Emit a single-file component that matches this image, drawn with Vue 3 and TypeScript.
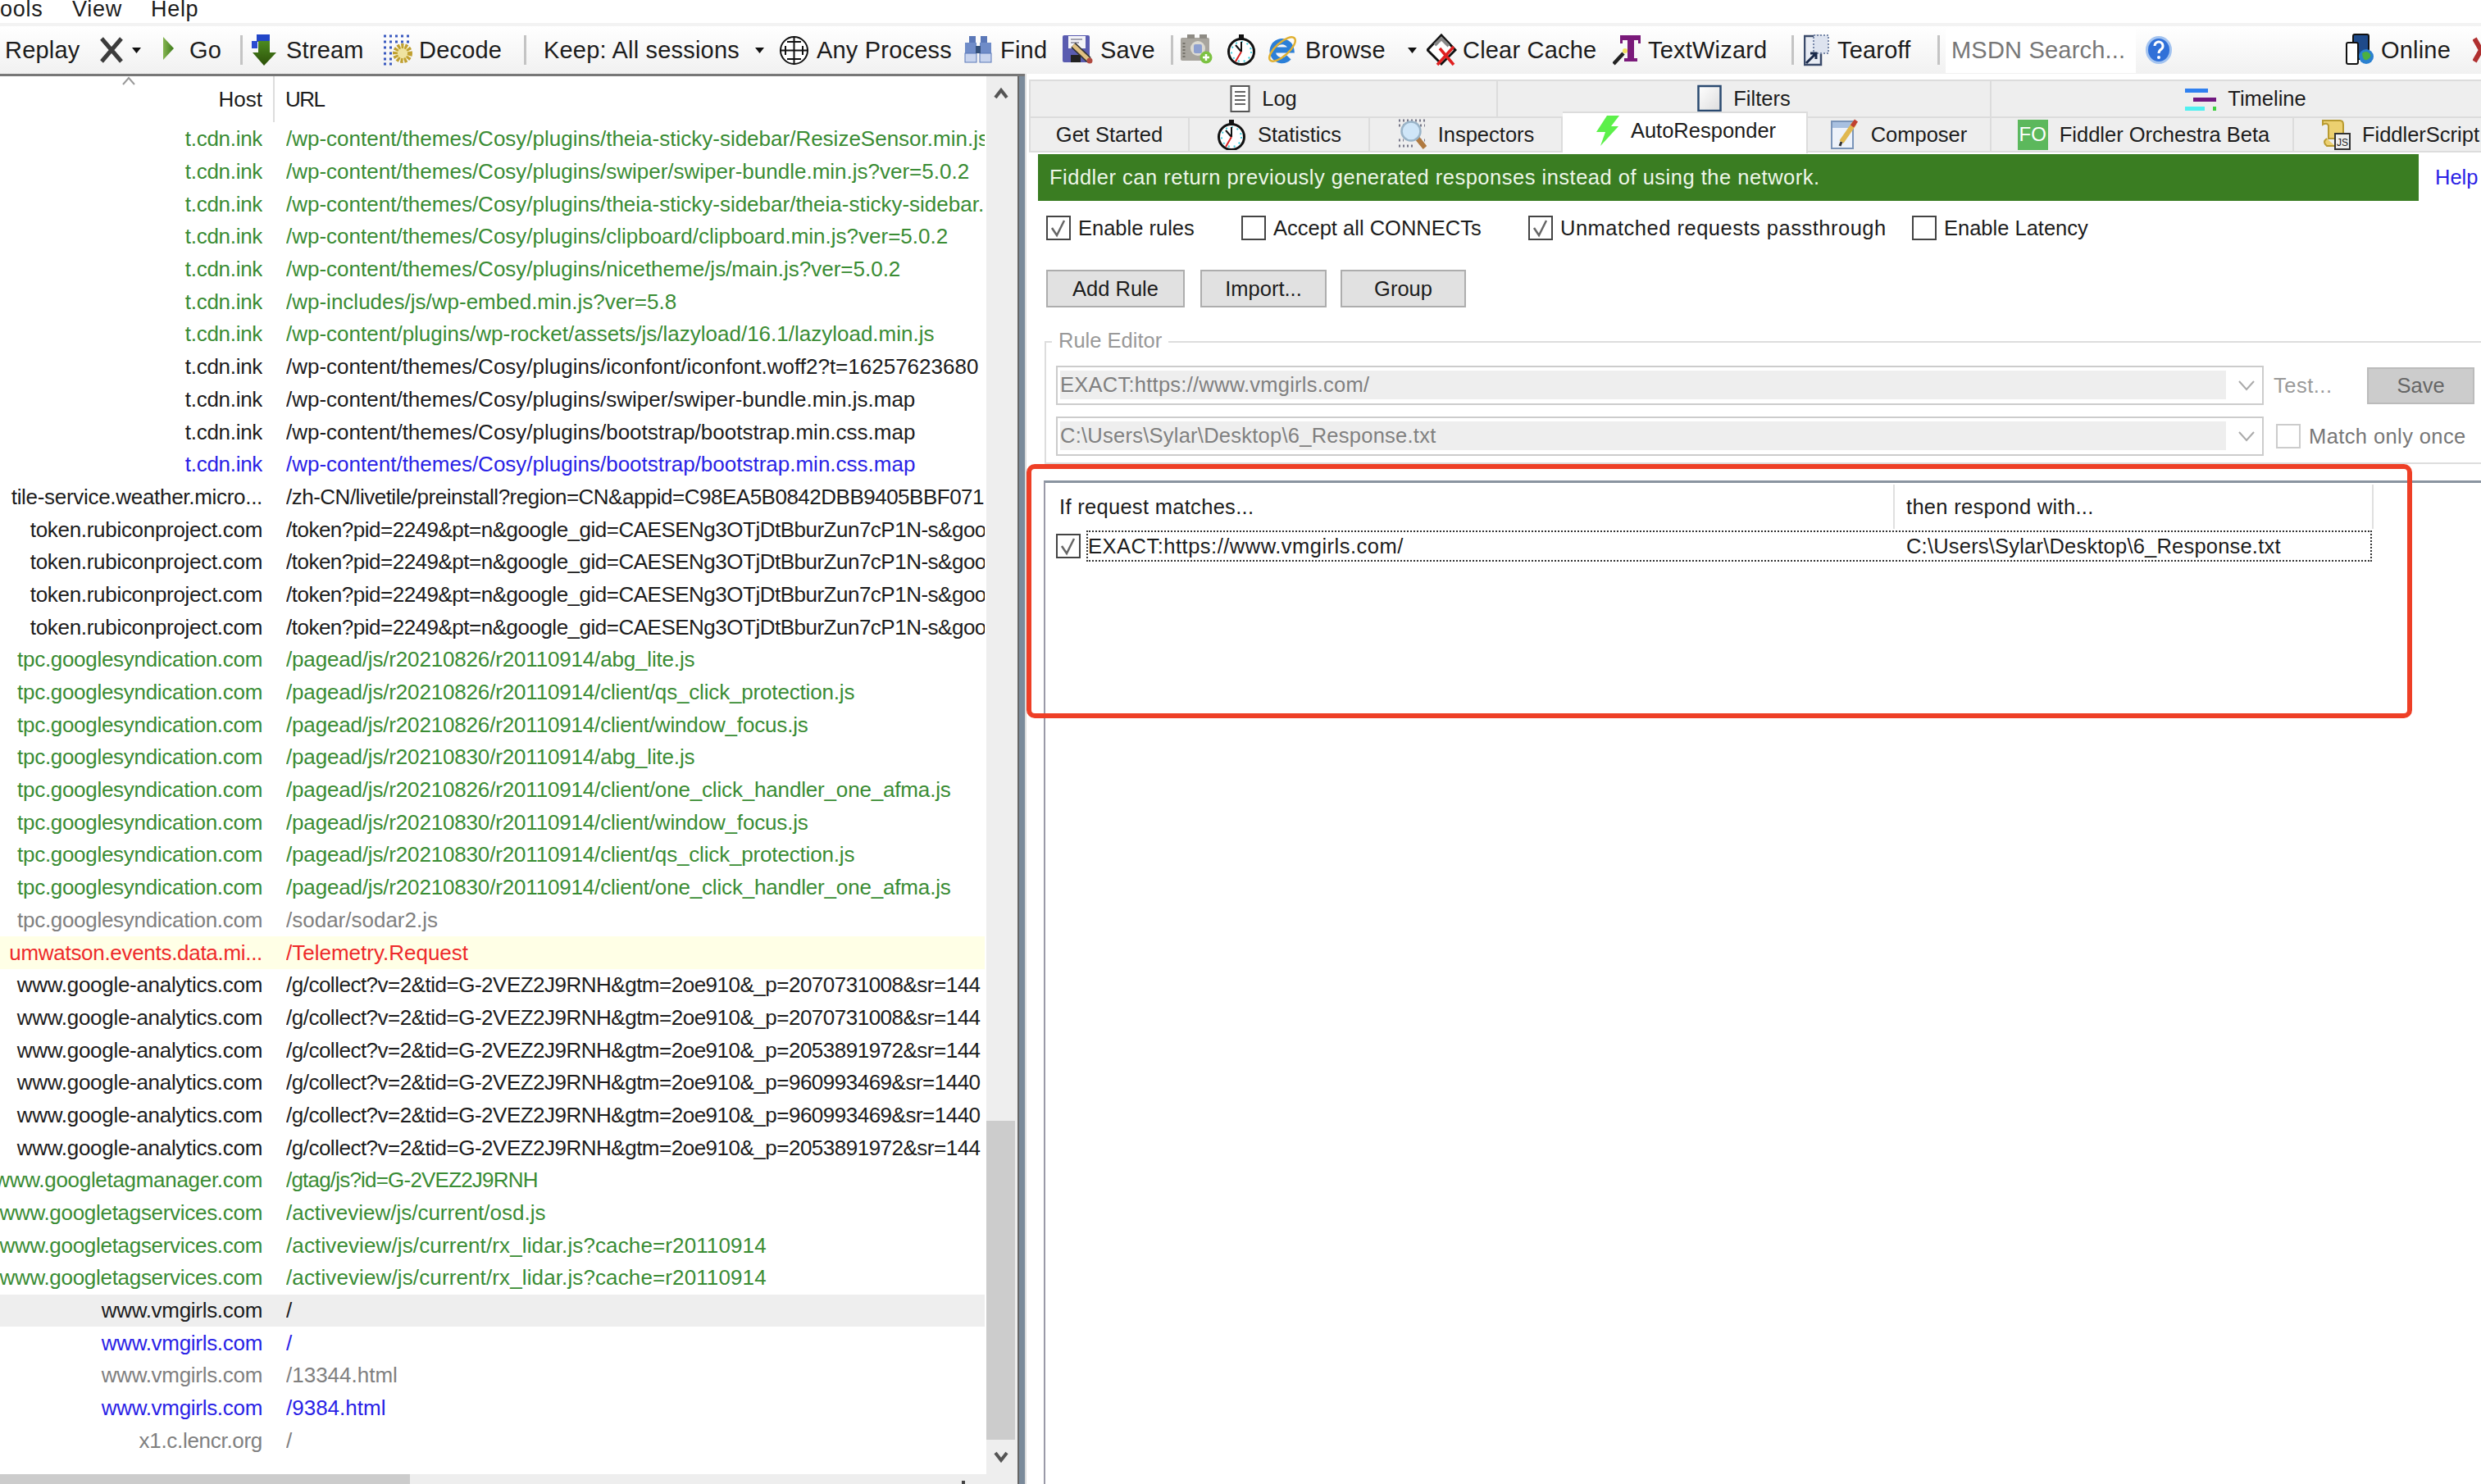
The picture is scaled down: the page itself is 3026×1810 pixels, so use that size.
<script setup lang="ts">
import { computed } from 'vue';

type Tool = { x: number; icon?: string; w?: number; label?: string; tx?: number; search?: boolean };
type Tab = { label: string; icon?: string; w?: number; span: number; active?: boolean; fo?: boolean };

const icons: Record<string, string> = {
  x: '<path d="M3 6 27 34M27 6 3 34" stroke="#3c3c3c" stroke-width="5" fill="none"/>',
  caret: '<path d="M0 17h11l-5.5 7z" fill="#111"/>',
  sep: '<rect x="0" y="2" width="3" height="36" fill="#c4c4c4"/>',
  play: '<defs><linearGradient id="gp" x1="0" x2="1"><stop offset="0" stop-color="#86b552"/><stop offset="1" stop-color="#3c7a18"/></linearGradient></defs><path d="M1 4 14 18 1 32Z" fill="url(#gp)"/>',
  stream: '<defs><linearGradient id="gs" x1="0" y1="0" x2="0" y2="1"><stop offset="0" stop-color="#4c8a20"/><stop offset="1" stop-color="#2c5008"/></linearGradient></defs><rect x="0" y="9" width="7" height="9" fill="#2a4bd0"/><rect x="6" y="1" width="16" height="9" fill="#2246c8"/><path d="M8 9h14v14h8L15 39 1 23h7z" fill="url(#gs)"/>',
  decode: '<path d="M2 3H37M2 10H37M2 17H12M2 24H12M2 31H12M2 37H12" stroke="#3a5ac0" stroke-width="3" stroke-dasharray="3 4" fill="none"/><circle cx="25" cy="24" r="9" fill="#efe3a0" stroke="#c0a030" stroke-width="6" stroke-dasharray="3 1.5"/>',
  process: '<circle cx="18.5" cy="20.5" r="16.5" fill="#fff" stroke="#111" stroke-width="2"/><path d="M18.5 3v35M1 20.5h35M10 10h17M10 31h17M8 15v11M29 15v11" stroke="#111" stroke-width="2" fill="none"/>',
  find: '<rect x="7" y="3" width="8" height="9" fill="#5b78b8"/><rect x="21" y="3" width="8" height="9" fill="#5b78b8"/><rect x="2" y="11" width="14" height="14" fill="#6f8cc8"/><rect x="20" y="11" width="14" height="14" fill="#6f8cc8"/><rect x="2" y="24" width="14" height="11" fill="#c8d4ee" stroke="#5b78b8"/><rect x="20" y="24" width="14" height="11" fill="#c8d4ee" stroke="#5b78b8"/><rect x="15" y="15" width="6" height="9" fill="#34507a"/>',
  save: '<rect x="0" y="2" width="33" height="33" rx="2" fill="#5a5cb0"/><rect x="7" y="3" width="21" height="15" fill="#f4f4f8"/><path d="M10 7h14M10 11h10" stroke="#889" stroke-width="1.5"/><rect x="10" y="26" width="12" height="9" fill="#222"/><path d="M13 14 32 32" stroke="#333" stroke-width="8"/><path d="M13 14 32 32" stroke="#e0c080" stroke-width="5"/><circle cx="33" cy="33" r="3.5" fill="#b04a40"/>',
  camera: '<rect x="0" y="5" width="35" height="28" rx="2" fill="#a8a59e"/><rect x="8" y="1" width="9" height="5" fill="#8e8b84"/><rect x="23" y="1" width="9" height="5" fill="#8e8b84"/><path d="M4 11v18" stroke="#77746c" stroke-width="3" stroke-dasharray="2 2"/><circle cx="21" cy="18" r="9" fill="#dcdad2"/><rect x="16" y="13" width="10" height="11" rx="2" fill="#8ea0d0"/><circle cx="31" cy="29" r="7.5" fill="#7cc242"/><path d="M31 25v8M27 29h8" stroke="#fff" stroke-width="2.5"/>',
  timer: '<rect x="15" y="1" width="6" height="5" fill="#111"/><circle cx="18" cy="22" r="15.5" fill="#fff" stroke="#111" stroke-width="3"/><circle cx="18" cy="22" r="12" fill="none" stroke="#40d0e0" stroke-width="2" stroke-dasharray="2 5"/><path d="M18 22V10M18 22 11 14" stroke="#111" stroke-width="2" fill="none"/><path d="M18 22 11 34" stroke="#d82020" stroke-width="2" fill="none"/>',
  ie: '<path d="M7 20H29A11.5 11.5 0 1 0 26 29" stroke="#2b7fd8" stroke-width="7" fill="none"/><ellipse cx="18" cy="19" rx="20" ry="8" transform="rotate(-42 18 19)" fill="none" stroke="#e0b030" stroke-width="2.5"/>',
  clear: '<path d="M18 2 35 20 18 37 1 20Z" fill="#fff" stroke="#111" stroke-width="3"/><path d="M10 14 18 6 27 15" stroke="#888" stroke-width="4" fill="none"/><path d="M16 18 33 38M33 16 13 38" stroke="#e02020" stroke-width="3.5"/>',
  wizard: '<path d="M9 2H34V12H31V8H26V30H30V34H14V30H18V8H12V12H9Z" fill="#7a1a7a"/><path d="M1 37 13 24" stroke="#222" stroke-width="4.5"/><circle cx="15" cy="21" r="3" fill="#f4e060"/>',
  tearoff: '<rect x="1" y="3" width="20" height="35" fill="#e8ecf4" stroke="#3a4a6a" stroke-width="2.5"/><rect x="12" y="2" width="18" height="22" fill="#dde3ef" stroke="#7a8aaa" stroke-width="2" stroke-dasharray="2 2"/><path d="M3 36 14 25M8 24h7v7" stroke="#1a2a4a" stroke-width="3" fill="none"/>',
  help: '<ellipse cx="16" cy="20" rx="14.5" ry="15.5" fill="#3070d8" stroke="#a4c4f0" stroke-width="3"/><path d="M11 15a5 5 0 1 1 8 4q-3 2-3 5" stroke="#fff" stroke-width="3" fill="none"/><circle cx="16" cy="29" r="2" fill="#fff"/>',
  online: '<rect x="9" y="1" width="19" height="30" rx="2" fill="#1e4a8a" stroke="#111" stroke-width="2"/><rect x="1" y="11" width="14" height="26" rx="2" fill="#fff" stroke="#111" stroke-width="2"/><circle cx="25" cy="28" r="9" fill="#2a80d0"/><path d="M20 24q5-4 9 0t-3 8q-5 2-6-8" fill="#4cb040"/>',
  close: '<path d="M2 6 18 34M18 6 2 34" stroke="#b03030" stroke-width="6"/>',
  log: '<rect x="1.5" y="3" width="22" height="31" fill="#fff" stroke="#555" stroke-width="2"/><path d="M6 10h13M6 15h13M6 20h13M6 25h13" stroke="#666" stroke-width="2"/>',
  filters: '<defs><linearGradient id="gf" x1="0" y1="0" x2="1" y2="1"><stop offset="0" stop-color="#fff"/><stop offset="1" stop-color="#ddd"/></linearGradient></defs><rect x="1.5" y="3" width="27" height="30" fill="url(#gf)" stroke="#2a4a70" stroke-width="2.5"/>',
  timeline: '<rect x="0" y="6" width="28" height="5" fill="#2f80f0"/><rect x="10" y="17" width="28" height="5" fill="#701880"/><rect x="0" y="28" width="24" height="5" fill="#50f0f0"/><rect x="34" y="28" width="4" height="5" fill="#40d040"/>',
  inspectors: '<path d="M2 2H34M2 8H8M28 8H34M2 26H8M28 26H34M2 33H22" stroke="#778" stroke-width="3" stroke-dasharray="2 3" fill="none"/><path d="M25 24 34 35" stroke="#b07a40" stroke-width="6"/><circle cx="17" cy="15" r="11.5" fill="#cfe6f8" stroke="#9ab4c8" stroke-width="2.5"/>',
  bolt: '<path d="M13 0H28L18 13H27L5 37 11 20H0Z" fill="#5cf04a"/>',
  composer: '<rect x="1" y="3" width="26" height="33" fill="#edf2fa" stroke="#7a94b8" stroke-width="2"/><rect x="2" y="4" width="24" height="7" fill="#a8c0e0"/><path d="M13 28 29 5" stroke="#e0b850" stroke-width="6"/><path d="M26 9 31 2" stroke="#c04030" stroke-width="5"/><path d="M13 28 11 33" stroke="#333" stroke-width="3"/>',
  script: '<path d="M3 2H24Q28 2 28 7V24H10V8Q8 4 3 7Z" fill="#ecd070" stroke="#b89a30" stroke-width="2"/><path d="M8 24Q2 28 8 33H18" fill="#ecd070" stroke="#b89a30" stroke-width="2"/><rect x="18" y="18" width="18" height="19" fill="#eee" stroke="#333" stroke-width="2"/><text x="27" y="33" font-size="12" font-family="Liberation Sans" text-anchor="middle" fill="#222">JS</text>',
};

const toolList: Tool[] = [
  { x: 6, label: 'Replay' },
  { x: 121, icon: 'x', w: 30 },
  { x: 161, icon: 'caret', w: 11 },
  { x: 198, icon: 'play', w: 15, label: 'Go', tx: 231 },
  { x: 293, icon: 'sep', w: 3 },
  { x: 307, icon: 'stream', w: 31, label: 'Stream', tx: 349 },
  { x: 466, icon: 'decode', w: 38, label: 'Decode', tx: 511 },
  { x: 639, icon: 'sep', w: 3 },
  { x: 663, label: 'Keep: All sessions' },
  { x: 921, icon: 'caret', w: 11 },
  { x: 950, icon: 'process', w: 37, label: 'Any Process', tx: 996 },
  { x: 1175, icon: 'find', w: 35, label: 'Find', tx: 1220 },
  { x: 1296, icon: 'save', w: 38, label: 'Save', tx: 1342 },
  { x: 1428, icon: 'sep', w: 3 },
  { x: 1440, icon: 'camera', w: 39 },
  { x: 1496, icon: 'timer', w: 36 },
  { x: 1546, icon: 'ie', w: 36, label: 'Browse', tx: 1592 },
  { x: 1717, icon: 'caret', w: 11 },
  { x: 1740, icon: 'clear', w: 37, label: 'Clear Cache', tx: 1784 },
  { x: 1967, icon: 'wizard', w: 34, label: 'TextWizard', tx: 2010 },
  { x: 2185, icon: 'sep', w: 3 },
  { x: 2200, icon: 'tearoff', w: 31, label: 'Tearoff', tx: 2241 },
  { x: 2363, icon: 'sep', w: 3 },
  { x: 2373, label: 'MSDN Search...', search: true },
  { x: 2617, icon: 'help', w: 32 },
  { x: 2861, icon: 'online', w: 34, label: 'Online', tx: 2904 },
  { x: 3016, icon: 'close', w: 20 },
];

// each tool cell is as wide as the distance to the next tool
const tools = computed(() =>
  toolList.map((t, i) => ({
    ...t,
    cell: (toolList[i + 1]?.x ?? 3040) - t.x,
    gap: t.tx && t.w ? t.tx - t.x - t.w : 0,
  })),
);

const topTabs: Tab[] = [
  { label: 'Log', icon: 'log', w: 25, span: 572 },
  { label: 'Filters', icon: 'filters', w: 30, span: 602 },
  { label: 'Timeline', icon: 'timeline', w: 38, span: 622 },
];
const subTabs: Tab[] = [
  { label: 'Get Started', span: 196 },
  { label: 'Statistics', icon: 'timer', w: 36, span: 220 },
  { label: 'Inspectors', icon: 'inspectors', w: 36, span: 235 },
  { label: 'AutoResponder', icon: 'bolt', w: 28, span: 299, active: true },
  { label: 'Composer', icon: 'composer', w: 35, span: 224 },
  { label: 'Fiddler Orchestra Beta', fo: true, span: 369 },
  { label: 'FiddlerScript', icon: 'script', w: 37, span: 260 },
];

const options = [
  { label: 'Enable rules', on: true, cell: 238 },
  { label: 'Accept all CONNECTs', on: false, cell: 350 },
  { label: 'Unmatched requests passthrough', on: true, cell: 468, wide: true },
  { label: 'Enable Latency', on: false, cell: 300 },
];
const buttons = [
  { label: 'Add Rule', width: 169, gap: 19 },
  { label: 'Import...', width: 154, gap: 17 },
  { label: 'Group', width: 153, gap: 0 },
];

const cdn = '/wp-content/themes/Cosy/plugins/';
const token = '/token?pid=2249&pt=n&google_gid=CAESENg3OTjDtBburZun7cP1N-s&goog';
const tpc = 'tpc.googlesyndication.com';
const ga = 'www.google-analytics.com';
const gts = 'www.googletagservices.com';
const gtag = '/g/collect?v=2&tid=G-2VEZ2J9RNH&gtm=2oe910&_p=';

const rows: { host: string; url: string; kind: string }[] = [
  { host: 't.cdn.ink', url: cdn + 'theia-sticky-sidebar/ResizeSensor.min.js?', kind: 'green' },
  { host: 't.cdn.ink', url: cdn + 'swiper/swiper-bundle.min.js?ver=5.0.2', kind: 'green' },
  { host: 't.cdn.ink', url: cdn + 'theia-sticky-sidebar/theia-sticky-sidebar.m', kind: 'green' },
  { host: 't.cdn.ink', url: cdn + 'clipboard/clipboard.min.js?ver=5.0.2', kind: 'green' },
  { host: 't.cdn.ink', url: cdn + 'nicetheme/js/main.js?ver=5.0.2', kind: 'green' },
  { host: 't.cdn.ink', url: '/wp-includes/js/wp-embed.min.js?ver=5.8', kind: 'green' },
  { host: 't.cdn.ink', url: '/wp-content/plugins/wp-rocket/assets/js/lazyload/16.1/lazyload.min.js', kind: 'green' },
  { host: 't.cdn.ink', url: cdn + 'iconfont/iconfont.woff2?t=16257623680', kind: 'black' },
  { host: 't.cdn.ink', url: cdn + 'swiper/swiper-bundle.min.js.map', kind: 'black' },
  { host: 't.cdn.ink', url: cdn + 'bootstrap/bootstrap.min.css.map', kind: 'black' },
  { host: 't.cdn.ink', url: cdn + 'bootstrap/bootstrap.min.css.map', kind: 'blue' },
  { host: 'tile-service.weather.micro...', url: '/zh-CN/livetile/preinstall?region=CN&appid=C98EA5B0842DBB9405BBF071E', kind: 'black' },
  { host: 'token.rubiconproject.com', url: token, kind: 'black' },
  { host: 'token.rubiconproject.com', url: token, kind: 'black' },
  { host: 'token.rubiconproject.com', url: token, kind: 'black' },
  { host: 'token.rubiconproject.com', url: token, kind: 'black' },
  { host: tpc, url: '/pagead/js/r20210826/r20110914/abg_lite.js', kind: 'green' },
  { host: tpc, url: '/pagead/js/r20210826/r20110914/client/qs_click_protection.js', kind: 'green' },
  { host: tpc, url: '/pagead/js/r20210826/r20110914/client/window_focus.js', kind: 'green' },
  { host: tpc, url: '/pagead/js/r20210830/r20110914/abg_lite.js', kind: 'green' },
  { host: tpc, url: '/pagead/js/r20210826/r20110914/client/one_click_handler_one_afma.js', kind: 'green' },
  { host: tpc, url: '/pagead/js/r20210830/r20110914/client/window_focus.js', kind: 'green' },
  { host: tpc, url: '/pagead/js/r20210830/r20110914/client/qs_click_protection.js', kind: 'green' },
  { host: tpc, url: '/pagead/js/r20210830/r20110914/client/one_click_handler_one_afma.js', kind: 'green' },
  { host: tpc, url: '/sodar/sodar2.js', kind: 'grey' },
  { host: 'umwatson.events.data.mi...', url: '/Telemetry.Request', kind: 'red' },
  { host: ga, url: gtag + '2070731008&sr=144', kind: 'black' },
  { host: ga, url: gtag + '2070731008&sr=144', kind: 'black' },
  { host: ga, url: gtag + '2053891972&sr=144', kind: 'black' },
  { host: ga, url: gtag + '960993469&sr=1440', kind: 'black' },
  { host: ga, url: gtag + '960993469&sr=1440', kind: 'black' },
  { host: ga, url: gtag + '2053891972&sr=144', kind: 'black' },
  { host: 'www.googletagmanager.com', url: '/gtag/js?id=G-2VEZ2J9RNH', kind: 'green' },
  { host: gts, url: '/activeview/js/current/osd.js', kind: 'green' },
  { host: gts, url: '/activeview/js/current/rx_lidar.js?cache=r20110914', kind: 'green' },
  { host: gts, url: '/activeview/js/current/rx_lidar.js?cache=r20110914', kind: 'green' },
  { host: 'www.vmgirls.com', url: '/', kind: 'selected' },
  { host: 'www.vmgirls.com', url: '/', kind: 'blue' },
  { host: 'www.vmgirls.com', url: '/13344.html', kind: 'grey' },
  { host: 'www.vmgirls.com', url: '/9384.html', kind: 'blue' },
  { host: 'x1.c.lencr.org', url: '/', kind: 'grey' },
];

// the long query strings sit tighter in the reference font than in ours
const urlFit = (url: string) => {
  if (url.startsWith('/gtag')) return 'fit-gtag';
  if (url.startsWith('/g/') || url.startsWith('/token') || url.startsWith('/zh-CN')) return 'fit-tight';
  if (url.startsWith('/pagead')) return 'fit-snug';
  if (url.includes('rx_lidar')) return 'fit-wide';
  return '';
};
</script>

<template>
  <div class="app">
    <div class="menu">
      <span class="menu-first">ools</span>
      <span class="menu-view">View</span>
      <span class="menu-help">Help</span>
    </div>

    <div class="toolbar">
      <div v-for="tool in tools" :key="tool.x" class="tool" :style="{ width: tool.cell + 'px' }">
        <svg
          v-if="tool.icon"
          :width="tool.w"
          height="40"
          :viewBox="`0 0 ${tool.w} 40`"
          class="tool-icon"
          v-html="icons[tool.icon]"
        ></svg>
        <span v-if="tool.search" class="search">{{ tool.label }}</span>
        <span v-else-if="tool.label" :style="{ marginLeft: tool.gap + 'px' }">{{ tool.label }}</span>
      </div>
    </div>

    <div class="main">
      <div class="sessions">
        <div class="list">
          <div class="head">
            <svg class="sort" width="18" height="11" viewBox="0 0 18 11">
              <path d="M2 10 9 2l7 8" fill="none" stroke="#999" stroke-width="2" />
            </svg>
            <div class="host">Host</div>
            <div class="url-head">URL</div>
          </div>
          <div v-for="(row, i) in rows" :key="i" class="row" :class="row.kind">
            <div class="host">{{ row.host }}</div>
            <div class="url" :class="urlFit(row.url)">{{ row.url }}</div>
          </div>
          <div class="list-rest"></div>
          <div class="hbar">
            <div class="hthumb"></div>
            <div class="hmark"></div>
          </div>
        </div>
        <div class="vbar">
          <div class="varrow">
            <svg width="18" height="14" viewBox="0 0 18 14">
              <path d="M2 12 9 3l7 9" fill="none" stroke="#555" stroke-width="4" />
            </svg>
          </div>
          <div class="vspace"></div>
          <div class="vthumb"></div>
          <div class="varrow">
            <svg width="18" height="14" viewBox="0 0 18 14">
              <path d="M2 2 9 11l7-9" fill="none" stroke="#555" stroke-width="4" />
            </svg>
          </div>
          <div class="vfoot"></div>
        </div>
        <div class="splitter"></div>
      </div>

      <div class="pane">
        <div class="tabs top-tabs">
          <div v-for="tab in topTabs" :key="tab.label" class="tab" :style="{ width: tab.span + 'px' }">
            <svg :width="tab.w" height="38" :viewBox="`0 0 ${tab.w} 38`" v-html="icons[tab.icon!]"></svg>
            <span>{{ tab.label }}</span>
          </div>
        </div>
        <div class="tabs sub-tabs">
          <div
            v-for="tab in subTabs"
            :key="tab.label"
            class="tab"
            :class="{ active: tab.active, 'fo-tab': tab.fo }"
            :style="{ width: tab.span + 'px' }"
          >
            <span v-if="tab.fo" class="fo">FO</span>
            <svg
              v-else-if="tab.icon"
              :width="tab.w"
              height="38"
              :viewBox="`0 0 ${tab.w} 38`"
              v-html="icons[tab.icon]"
            ></svg>
            <span>{{ tab.label }}</span>
          </div>
        </div>

        <div class="body">
          <div class="banner-row">
            <div class="banner">Fiddler can return previously generated responses instead of using the network.</div>
            <span class="help-link">Help</span>
          </div>

          <div class="options">
            <label
              v-for="opt in options"
              :key="opt.label"
              class="option"
              :class="{ wide: opt.wide }"
              :style="{ width: opt.cell + 'px' }"
            >
              <span class="cb">
                <svg v-if="opt.on" width="26" height="26" viewBox="0 0 26 26">
                  <path d="M5 13l6 9L20 4" fill="none" stroke="#666" stroke-width="2.5" />
                </svg>
              </span>
              {{ opt.label }}
            </label>
          </div>

          <div class="actions">
            <button
              v-for="btn in buttons"
              :key="btn.label"
              class="btn"
              :style="{ width: btn.width + 'px', marginRight: btn.gap + 'px' }"
            >
              {{ btn.label }}
            </button>
          </div>

          <div class="editor">
            <span class="legend">Rule Editor</span>
            <div class="editor-row">
              <div class="combo">
                <div class="combo-fill">EXACT:https://www.vmgirls.com/</div>
                <svg class="combo-arrow" width="22" height="14" viewBox="0 0 22 14">
                  <path d="M2 2l9 10 9-10" fill="none" stroke="#aaa" stroke-width="2" />
                </svg>
              </div>
              <span class="test">Test...</span>
              <button class="save">Save</button>
            </div>
            <div class="editor-row second">
              <div class="combo">
                <div class="combo-fill">C:\Users\Sylar\Desktop\6_Response.txt</div>
                <svg class="combo-arrow" width="22" height="14" viewBox="0 0 22 14">
                  <path d="M2 2l9 10 9-10" fill="none" stroke="#aaa" stroke-width="2" />
                </svg>
              </div>
              <label class="once"><span class="cb off"></span>Match only once</label>
            </div>
          </div>

          <div class="rules">
            <div class="rules-head">
              <div class="rules-col first">If request matches...</div>
              <div class="rules-col">then respond with...</div>
            </div>
            <div class="rule">
              <span class="cb">
                <svg width="26" height="26" viewBox="0 0 26 26">
                  <path d="M5 13l6 9L20 4" fill="none" stroke="#666" stroke-width="2.5" />
                </svg>
              </span>
              <div class="rule-line">
                <div class="rule-match">EXACT:https://www.vmgirls.com/</div>
                <div>C:\Users\Sylar\Desktop\6_Response.txt</div>
              </div>
            </div>
          </div>
        </div>
      </div>
    </div>

    <div class="callout"></div>
  </div>
</template>

<style scoped>
.app {
  position: relative;
  width: 3026px;
  height: 1810px;
  overflow: hidden;
  background: #fff;
  color: #1c1c1c;
  font-family: "Liberation Sans", Arial, sans-serif;
  font-size: 26px;
  display: flex;
  flex-direction: column;
}

.menu {
  height: 28px;
  display: flex;
  align-items: center;
  font-size: 27px;
  letter-spacing: 0.7px;
  overflow: hidden;
  flex: none;
  padding-bottom: 6px;
  box-sizing: border-box;
}
.menu-first { width: 88px; }
.menu-view { width: 96px; }

.toolbar {
  height: 62px;
  flex: none;
  display: flex;
  align-items: center;
  padding-left: 6px;
  box-sizing: border-box;
  border-top: 4px solid #f3f3f3;
  background: linear-gradient(#fff, #f1f1f1);
  font-size: 29px;
  letter-spacing: 0.2px;
  white-space: nowrap;
}
.tool {
  flex: none;
  display: flex;
  align-items: center;
  height: 40px;
}
.tool-icon { flex: none; }
.search {
  width: 232px;
  height: 55px;
  line-height: 55px;
  background: #fff;
  color: #777;
  padding-left: 7px;
  box-sizing: border-box;
  flex: none;
}

.main {
  flex: 1;
  display: flex;
  min-height: 0;
}

.sessions {
  width: 1250px;
  flex: none;
  display: flex;
  border-top: 3px solid #777;
  box-sizing: border-box;
}
.list {
  width: 1203px;
  flex: none;
  display: flex;
  flex-direction: column;
  min-width: 0;
  background: #fff;
}
.head {
  position: relative;
  height: 57px;
  flex: none;
  display: grid;
  grid-template-columns: 320px 1fr;
  column-gap: 28px;
  align-items: center;
}
.head::after {
  content: "";
  position: absolute;
  left: 333px;
  top: 0;
  width: 2px;
  height: 56px;
  background: #ddd;
}
.url-head { letter-spacing: -1.5px; }
.sort {
  position: absolute;
  left: 148px;
  top: 0;
}
.row {
  height: 39.7px;
  width: 1201px;
  flex: none;
  display: grid;
  grid-template-columns: 320px 1fr;
  column-gap: 29px;
  align-items: center;
  white-space: nowrap;
}
.host {
  display: flex;
  justify-content: flex-end;
  overflow: hidden;
  white-space: nowrap;
}
.row .host { letter-spacing: -0.3px; }
.url {
  overflow: hidden;
}
.fit-tight { letter-spacing: -0.5px; }
.fit-snug { letter-spacing: -0.17px; }
.fit-wide { letter-spacing: 0.12px; }
.fit-gtag { letter-spacing: -0.8px; }
.green { color: #3a8c34; }
.black { color: #1c1c1c; }
.blue { color: #2a22e6; }
.grey { color: #808080; }
.red { color: #ee2a2a; background: #ffffe6; }
.selected { background: #eeeeee; }
.list-rest { flex: 1; }
.hbar {
  height: 12px;
  flex: none;
  background: #eee;
  display: flex;
  justify-content: space-between;
}
.hthumb {
  width: 500px;
  background: #ccc;
}
.hmark {
  width: 4px;
  height: 4px;
  margin: 8px 26px 0 0;
  background: #444;
}

.vbar {
  width: 38px;
  flex: none;
  background: #eee;
  display: flex;
  flex-direction: column;
  align-items: flex-start;
}
.varrow {
  height: 42px;
  width: 35px;
  display: flex;
  align-items: center;
  justify-content: center;
  flex: none;
}
.vspace { flex: 1; }
.vthumb {
  width: 35px;
  height: 389px;
  background: #ccc;
  flex: none;
}
.vfoot { height: 12px; flex: none; }
.splitter {
  width: 9px;
  flex: none;
  box-sizing: border-box;
  background: #7b8b9b;
  border-left: 2px solid #666;
}

.pane {
  flex: 1;
  min-width: 0;
  border-left: 2px solid #ddd;
  display: flex;
  flex-direction: column;
  font-size: 25.5px;
  overflow: hidden;
}
.tabs {
  display: flex;
  flex: none;
  padding-left: 3px;
  width: max-content;
}
.top-tabs {
  height: 45px;
  margin-top: 7px;
}
.sub-tabs {
  height: 44px;
  position: relative;
}
.tab {
  flex: none;
  box-sizing: border-box;
  display: flex;
  align-items: center;
  justify-content: center;
  gap: 14px;
  background: #eeeeee;
  border: 2px solid #dcdcdc;
  border-left-width: 0;
  white-space: nowrap;
}
.tab:first-child { border-left-width: 2px; }
.top-tabs .tab { border-bottom-width: 0; }
.tab.active {
  background: #fff;
  height: 51px;
  margin-top: -6px;
  border-bottom: 0;
  padding: 0 0 6px 4px;
}
.fo-tab { padding-left: 4px; }
.fo {
  width: 37px;
  height: 37px;
  background: #5cb85c;
  color: #fff;
  font-size: 24px;
  display: flex;
  align-items: center;
  justify-content: center;
}

.body {
  flex: 1;
  min-height: 0;
  display: flex;
  flex-direction: column;
  padding-left: 14px;
}
.banner-row {
  margin-top: 2px;
  display: flex;
  align-items: center;
  white-space: nowrap;
}
.banner {
  width: 1684px;
  height: 57px;
  flex: none;
  box-sizing: border-box;
  padding-left: 14px;
  line-height: 56px;
  background: #3a7d22;
  color: #eef6e8;
  letter-spacing: 0.5px;
}
.help-link {
  margin-left: 20px;
  color: #2a22e6;
}
.options {
  margin-top: 18px;
  display: flex;
  padding-left: 10px;
  white-space: nowrap;
}
.option {
  display: flex;
  align-items: center;
  gap: 9px;
  flex: none;
}
.option.wide { letter-spacing: 0.5px; }
.cb {
  width: 30px;
  height: 30px;
  box-sizing: border-box;
  border: 2px solid #444;
  background: #fff;
  flex: none;
  display: block;
}
.cb svg { display: block; }
.cb.off { border-color: #ccc; }
.actions {
  margin-top: 36px;
  padding-left: 10px;
  display: flex;
}
.btn {
  height: 46px;
  box-sizing: border-box;
  border: 2px solid #adadad;
  background: #e1e1e1;
  font: inherit;
  color: #1c1c1c;
  padding: 0;
  flex: none;
}

.editor {
  position: relative;
  margin-top: 41px;
  margin-left: 8px;
  width: 1800px;
  box-sizing: border-box;
  border: 2px solid #ddd;
  padding: 28px 0 8px 12px;
  flex: none;
}
.legend {
  position: absolute;
  left: 7px;
  top: -17px;
  padding: 0 8px;
  background: #fff;
  color: #999;
}
.editor-row {
  display: flex;
  align-items: center;
}
.editor-row.second { margin-top: 14px; }
.combo {
  width: 1473px;
  height: 48px;
  flex: none;
  box-sizing: border-box;
  border: 2px solid #ccc;
  padding: 4px 0 5px 3px;
  display: flex;
  align-items: center;
}
.combo-fill {
  width: 1422px;
  height: 100%;
  flex: none;
  display: flex;
  align-items: center;
  background: #eeeeee;
  color: #808080;
  letter-spacing: 0.25px;
}
.combo-arrow { margin-left: 14px; }
.test {
  margin-left: 12px;
  width: 114px;
  flex: none;
  color: #9a9a9a;
  letter-spacing: 0.5px;
}
.save {
  width: 131px;
  height: 45px;
  box-sizing: border-box;
  border: 2px solid #bbb;
  background: #cccccc;
  font: inherit;
  color: #666;
  padding: 0;
  flex: none;
}
.once {
  margin-left: 15px;
  display: flex;
  align-items: center;
  gap: 10px;
  color: #777;
  white-space: nowrap;
  letter-spacing: 0.4px;
}

.rules {
  flex: 1;
  margin-top: 20px;
  margin-left: 7px;
  width: 1800px;
  box-sizing: border-box;
  border-top: 3px solid #8a94a0;
  border-left: 2px solid #9a9aa8;
}
.rules-head {
  display: flex;
  height: 58px;
  box-sizing: border-box;
  padding-top: 2px;
}
.rules-col {
  width: 584px;
  box-sizing: border-box;
  padding-left: 14px;
  line-height: 54px;
  border-right: 2px solid #e0e0e0;
  height: 54px;
  letter-spacing: 0.3px;
}
.rules-col.first {
  width: 1036px;
  padding-left: 17px;
}
.rule {
  display: flex;
  align-items: center;
  padding-left: 13px;
  height: 38px;
}
.rule-line {
  margin-left: 7px;
  width: 1568px;
  height: 38px;
  box-sizing: border-box;
  border: 2px dotted #333;
  display: flex;
  align-items: center;
  white-space: nowrap;
  flex: none;
  letter-spacing: 0.2px;
}
.rule-match {
  width: 998px;
  flex: none;
  letter-spacing: 0.5px;
}

.callout {
  position: absolute;
  left: 1252px;
  top: 566px;
  width: 1690px;
  height: 310px;
  box-sizing: border-box;
  border: 6px solid #ee3f26;
  border-radius: 10px;
  pointer-events: none;
}
</style>

<style>
html,
body {
  margin: 0;
  overflow: hidden;
}
</style>
